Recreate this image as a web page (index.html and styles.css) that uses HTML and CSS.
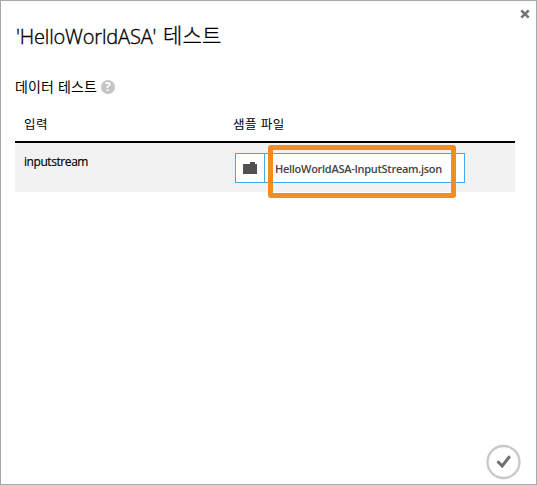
FILE: index.html
```html
<!DOCTYPE html>
<html lang="ko">
<head>
<meta charset="utf-8">
<title>'HelloWorldASA' 테스트</title>
<link rel="stylesheet" href="styles.css">
</head>
<body>
<main class="dialog">
  <button class="close" aria-label="닫기">
    <svg width="10" height="10" viewBox="0 0 10 10"><path d="M1.3 1.3 8.7 8.7M8.7 1.3 1.3 8.7"/></svg>
  </button>
  <h1 class="title"><span class="title-name">'HelloWorldASA'</span> <span class="title-ko">테스트</span></h1>
  <h2 class="subtitle"><span class="subtitle-text">데이터 테스트</span><span class="help">?</span></h2>
  <section class="table">
    <div class="row head"><div>입력</div><div>샘플 파일</div></div>
    <div class="row body">
      <div class="name">inputstream</div>
      <div class="picker">
        <button class="browse" aria-label="찾아보기">
          <svg width="14" height="12" viewBox="0 0 14 12"><path d="M0 2H7V0H12V2H14V12H0Z"/></svg>
        </button>
        <div class="file"><span class="file-name">HelloWorldASA-InputStream.json</span></div>
        <div class="highlight"></div>
      </div>
    </div>
  </section>
  <button class="confirm" aria-label="확인">
    <svg width="36" height="36" viewBox="0 0 36 36"><circle cx="17.5" cy="18" r="16"/><path d="M11.5 17.3 16.2 22 23.8 12.3"/></svg>
  </button>
</main>
</body>
</html>
```
FILE: styles.css
```css
* { box-sizing: border-box; }
body { margin: 0; background: #fff; }
button { padding: 0; border: 0; background: none; display: block; }
svg { display: block; }
.dialog {
  position: relative;
  width: 537px;
  height: 485px;
  border: 1px solid #a9a9a9;
  padding: 20px 21px 0 14px;
  color: #000;
  font-family: "Open Sans", "Noto Sans CJK KR", sans-serif;
}
.close { position: absolute; top: 8px; right: 6px; }
.close path { stroke: #727778; stroke-width: 2.6; fill: none; }
.title {
  display: flex;
  margin: 0;
  height: 30px;
  line-height: 32px;
  font-size: 20px;
  font-weight: 300;
}
.title-name { width: 148px; padding-left: 1px; letter-spacing: -0.15px; -webkit-text-stroke: 0.35px #000; white-space: nowrap; }
.title-ko { font-family: "Noto Sans CJK KR", sans-serif; font-size: 21px; line-height: 27px; letter-spacing: 0.2px; -webkit-text-stroke: 0.3px #000; }
.subtitle {
  display: flex;
  align-items: center;
  gap: 4px;
  margin: 26px 0 0;
  height: 20px;
  font-size: 14px;
  font-weight: 400;
}
.subtitle-text { line-height: 18px; padding-bottom: 1px; letter-spacing: 0.15px; }
.help {
  width: 14px;
  height: 14px;
  border-radius: 50%;
  background: #c4c4c4;
  color: #fff;
  font-size: 12px;
  font-weight: 700;
  line-height: 14px;
  text-align: center;
}
.table { margin-top: 14px; font-size: 12px; }
.row { display: grid; grid-template-columns: 220px 1fr; }
.head { height: 32px; padding-left: 9px; border-bottom: 2px solid #000; line-height: 27px; font-size: 12.5px; letter-spacing: 0.5px; grid-template-columns: 209px 1fr; }
.body { height: 49px; background: #f2f2f2; padding-top: 10px; }
.name { padding-left: 9px; line-height: 18px; letter-spacing: -0.43px; -webkit-text-stroke: 0.15px #000; }
.picker {
  position: relative;
  display: flex;
  width: 230px;
  height: 30px;
  border: 1px solid #45a8ee;
  background: #fff;
}
.browse { width: 29px; padding-left: 7px; border-right: 1px solid #45a8ee; }
.browse path { fill: #505050; }
.file { padding-left: 10px; line-height: 30px; font-size: 11px; font-weight: 600; letter-spacing: -0.28px; color: #444; white-space: nowrap; }
.highlight {
  position: absolute;
  left: 32px;
  top: -9px;
  width: 188px;
  height: 53px;
  border: 5px solid #f68b1f;
  border-radius: 3px;
}
.confirm { position: absolute; left: 485px; top: 443px; }
.confirm circle { fill: #fff; stroke: #c8c8c8; stroke-width: 2.3; }
.confirm path { fill: none; stroke: #707070; stroke-width: 3; }
```
